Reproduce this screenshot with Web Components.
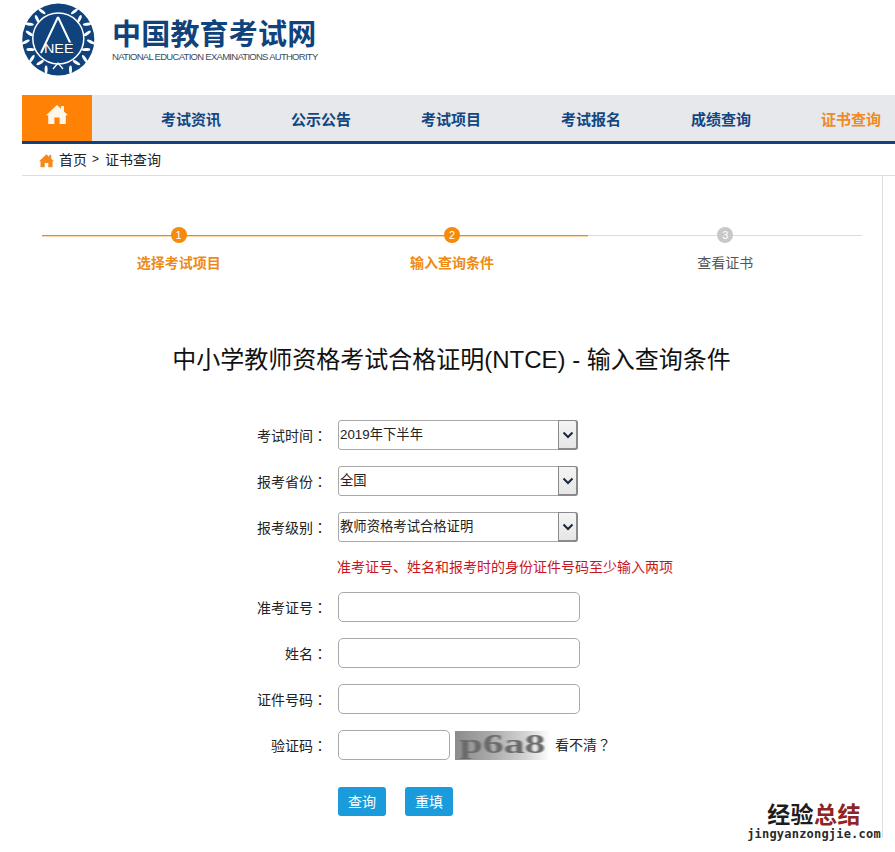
<!DOCTYPE html>
<html lang="zh-CN"><head><meta charset="utf-8"><title>中国教育考试网</title>
<style>
html,body{margin:0;padding:0;background:#fff}
body{font-family:"Liberation Sans","Noto Sans CJK SC",sans-serif;font-size:14px;color:#222;position:relative;height:852px;overflow:hidden}
h1{font:400 24px/34px "Liberation Sans","Noto Sans CJK SC",sans-serif;color:#111;margin:71px 0 43px;text-align:center;white-space:nowrap;width:859px}
.tc{font-family:"Noto Sans CJK TC",sans-serif}
</style></head><body>
<site-header></site-header>
<site-nav></site-nav>
<bread-crumb></bread-crumb>
<page-main>
  <step-bar></step-bar>
  <h1>中小学教师资格考试合格证明(NTCE) - 输入查询条件</h1>
  <form-row label="考试时间"><fake-select value="2019年下半年"></fake-select></form-row>
  <form-row label="报考省份"><fake-select value="全国"></fake-select></form-row>
  <form-row label="报考级别"><fake-select value="教师资格考试合格证明"></fake-select></form-row>
  <form-row thin><warn-text>准考证号、姓名和报考时的身份证件号码至少输入两项</warn-text></form-row>
  <form-row label="准考证号"><text-field></text-field></form-row>
  <form-row label="姓名"><text-field></text-field></form-row>
  <form-row label="证件号码"><text-field></text-field></form-row>
  <form-row label="验证码"><text-field short></text-field><cap-tcha></cap-tcha><span style="margin-left:5px;position:relative;top:-1px">看不清<span class="tc" lang="zh-Hant">？</span></span></form-row>
  <form-row buttons><blue-btn>查询</blue-btn><blue-btn>重填</blue-btn></form-row>
</page-main>
<water-mark></water-mark>
<script>
const def=(n,html,init)=>customElements.define(n,class extends HTMLElement{
  constructor(){super();this.attachShadow({mode:'open'}).innerHTML=typeof html==='function'?html(this):html;}
  connectedCallback(){if(init)init(this)}
});
const HOUSE='M12 2 L16 5.700 L16 3 L19 3 L19 8.500 L23 12.200 L20.800 12.200 L20.800 21 L14.600 21 L14.600 14.500 L9.400 14.500 L9.400 21 L3.200 21 L3.200 12.200 L1 12.200 Z';

function leaves(){
  let s='';
  for(const side of [-1,1]){
    let i=0;
    for(let a=30;a<=158;a+=16){
      const R=i%2?29.5:32.5;
      const r=a*Math.PI/180, x=58.3+side*R*Math.sin(r), y=39.5-R*Math.cos(r);
      const rot=side*(a+(i%2?-22:22));
      s+=`<ellipse cx="${x.toFixed(1)}" cy="${y.toFixed(1)}" rx="1.500" ry="4.200" fill="#fff" transform="rotate(${rot} ${x.toFixed(1)} ${y.toFixed(1)})"/>`;
      i++;
    }
  }
  return s;
}
def('site-header',`<style>
:host{display:flex;height:95px;box-sizing:border-box;padding:3px 0 0 22px;gap:17px}
.t{display:flex;flex-direction:column;padding-top:14px}
.cn{font:700 29px/30px "Noto Sans CJK SC",sans-serif;color:#10437c;white-space:nowrap;letter-spacing:.2px;height:30px}
.en{font:9.500px/12px "Liberation Sans",sans-serif;color:#3c4a5c;white-space:nowrap;letter-spacing:-.72px;margin-top:4px}
svg{display:block}
</style>
<svg width="73" height="73" viewBox="22 3 73 73">
<circle cx="58.300" cy="39.500" r="36" fill="#10437c"/>
<g>${leaves()}</g>
<circle cx="58.300" cy="38.500" r="25.500" fill="#10437c" stroke="#fff" stroke-width="1.500"/>
<path d="M58 17 L41 53 M58 17 L75 53" fill="none" stroke="#fff" stroke-width="2"/>
<rect x="47" y="42.500" width="29.500" height="11" fill="#10437c"/>
<text x="44" y="52.500" font-family="Liberation Sans,sans-serif" font-size="13.500" fill="#fff" textLength="29.500" lengthAdjust="spacingAndGlyphs">NEE</text>
<path d="M53 69 L58 63 L63 69" fill="none" stroke="#fff" stroke-width="1.200"/>
</svg>
<div class="t"><div class="cn">中国教育考试网</div><div class="en">NATIONAL EDUCATION EXAMINATIONS AUTHORITY</div></div>`);

def('site-nav',`<style>
:host{display:flex;margin-left:22px;height:49px;box-sizing:border-box;background:#e6e8ec;border-bottom:3px solid #10437c}
.home{flex:none;width:70px;height:46px;background:#ff8207;display:flex;justify-content:center;padding-top:8px;box-sizing:border-box}
ul{list-style:none;display:flex;margin:0;padding:0 0 0 69px}
li{font:700 15px/48px "Noto Sans CJK SC",sans-serif;color:#12467f;width:60px;white-space:nowrap;margin-right:70px;text-align:center}
li:nth-child(3){margin-right:80px}
li:last-child{margin-right:0}
li.on{color:#f08a24}
</style>
<div class="home"><svg width="24" height="24" viewBox="0 0 24 24"><path d="${HOUSE}" fill="#fff6ea"/></svg></div>
<ul><li>考试资讯</li><li>公示公告</li><li>考试项目</li><li>考试报名</li><li>成绩查询</li><li class="on">证书查询</li></ul>`);

def('bread-crumb',`<style>
:host{display:flex;align-items:center;margin-left:22px;height:32px;box-sizing:border-box;border-bottom:1px solid #dedede;padding-left:16px;font-size:14px;color:#222;padding-bottom:1px}
svg{margin-right:4px;margin-top:2px}
span{margin:0 6px 0 5px;font-size:12px}
</style><svg width="17" height="15" viewBox="0 0 24 22"><path d="${HOUSE}" fill="#f48a1e"/></svg>首页<span>&gt;</span>证书查询`);

def('page-main',`<style>
:host{display:block;margin-left:22px;width:861px;height:662px;box-sizing:border-box;border-right:1px solid #dedede;padding-top:51px}
</style><slot></slot>`);

def('step-bar',`<style>
:host{display:grid;grid-template-columns:repeat(3,1fr);margin:0 20px;width:820px;position:relative}
.line{position:absolute;left:0;right:0;top:8px;height:1px;background:#dcdcdc}
.line i{display:block;width:546px;height:1px;background:#f08a10;box-shadow:0 1px 0 rgba(240,138,16,.35)}
.s{display:flex;flex-direction:column;align-items:center;position:relative}
b{width:16px;height:16px;border-radius:50%;background:#f58a0b;color:#fff;font:400 11px/16px "Liberation Sans",sans-serif;text-align:center}
span{font:700 14px/20px "Noto Sans CJK SC",sans-serif;color:#ee8a17;margin-top:9px}
.off b{background:#c8c8c8}
.off span{font-weight:400;color:#555}
</style><div class="line"><i></i></div>
<div class="s"><b>1</b><span>选择考试项目</span></div>
<div class="s"><b>2</b><span>输入查询条件</span></div>
<div class="s off"><b>3</b><span>查看证书</span></div>`);

def('form-row',t=>`<style>
:host{display:flex;align-items:center;height:30px;margin-bottom:16px}
:host([thin]){height:18px}
:host([buttons]){margin-top:27px;height:29px}
.l{width:305px;text-align:right;font-size:14px;color:#222;margin-right:11px;white-space:nowrap;flex:none}
.c{font-family:"Noto Sans CJK TC",sans-serif}
</style><div class="l">${t.hasAttribute('label')?t.getAttribute('label')+'<span class="c" lang="zh-Hant">：</span>':''}</div><slot></slot>`);

def('fake-select',t=>`<style>
:host{display:block;position:relative;width:240px;height:30px}
select{appearance:none;-webkit-appearance:none;width:100%;height:100%;box-sizing:border-box;border:1px solid #a9a9a9;border-radius:3px;background:#fff;font:13.333px "Liberation Sans","Noto Sans CJK SC",sans-serif;color:#222;padding:0 0 2px 1px;outline:0}
.a{position:absolute;right:0;top:0;width:20px;height:30px;box-sizing:border-box;background:linear-gradient(#f4f4f4,#e6e6e6);border:1px solid #8a8a8a;border-bottom-width:2px;border-right-width:2px;border-radius:0 3px 3px 0;display:flex;align-items:center;justify-content:center}
</style><select><option>${t.getAttribute('value')}</option></select>
<div class="a"><svg width="12" height="8" viewBox="0 0 12 8"><path d="M1.500 1.500 L6 6 L10.500 1.500" fill="none" stroke="#1a2a3a" stroke-width="2"/></svg></div>`);

def('text-field',t=>`<style>
:host{display:block;width:${t.hasAttribute('short')?112:242}px;height:30px}
input{display:block;width:100%;height:100%;box-sizing:border-box;border:1px solid #a9a9a9;border-radius:5px;background:#fff;outline:0;padding:0 4px}
</style><input type="text">`);

def('cap-tcha',`<style>
:host{display:block;width:95px;height:29px;margin-left:5px;background:linear-gradient(90deg,#8b8b8b 0%,#a8a8a8 35%,#d4d4d4 75%,#fff 100%);text-align:center}
span{font:700 27px/29px "Liberation Serif",serif;color:#6a6a6a;letter-spacing:0;filter:blur(.6px);display:block;transform:translateY(-1px) scaleX(1.550)}
</style><span>p6a8</span>`);

def('warn-text',`<style>:host{display:block;color:#c8161d;font-size:14px;white-space:nowrap;margin-left:-1px;line-height:18px}</style><slot></slot>`);

def('blue-btn',`<style>
:host{display:block;margin-right:19px}
button{display:block;width:48px;height:29px;border:0;border-radius:3px;background:#1a9bdc;color:#fff;font:14px "Noto Sans CJK SC",sans-serif;padding:0 0 1px}
</style><button type="button"><slot></slot></button>`);

def('water-mark',`<style>
:host{position:absolute;left:746px;top:800px;width:136px;text-align:center;background:transparent}
.a{font:700 23px/26px "Noto Sans CJK SC",sans-serif;letter-spacing:.4px;color:#1d1d1d}
.a i{font-style:normal;color:#8f2424}
.b{font:700 12px/14px "DejaVu Sans Mono",monospace;color:#2a2a2a;letter-spacing:.2px;white-space:nowrap;margin-top:1px}
</style><div class="a">经验<i>总结</i></div><div class="b">jingyanzongjie.com</div>`);
</script>
</body></html>
